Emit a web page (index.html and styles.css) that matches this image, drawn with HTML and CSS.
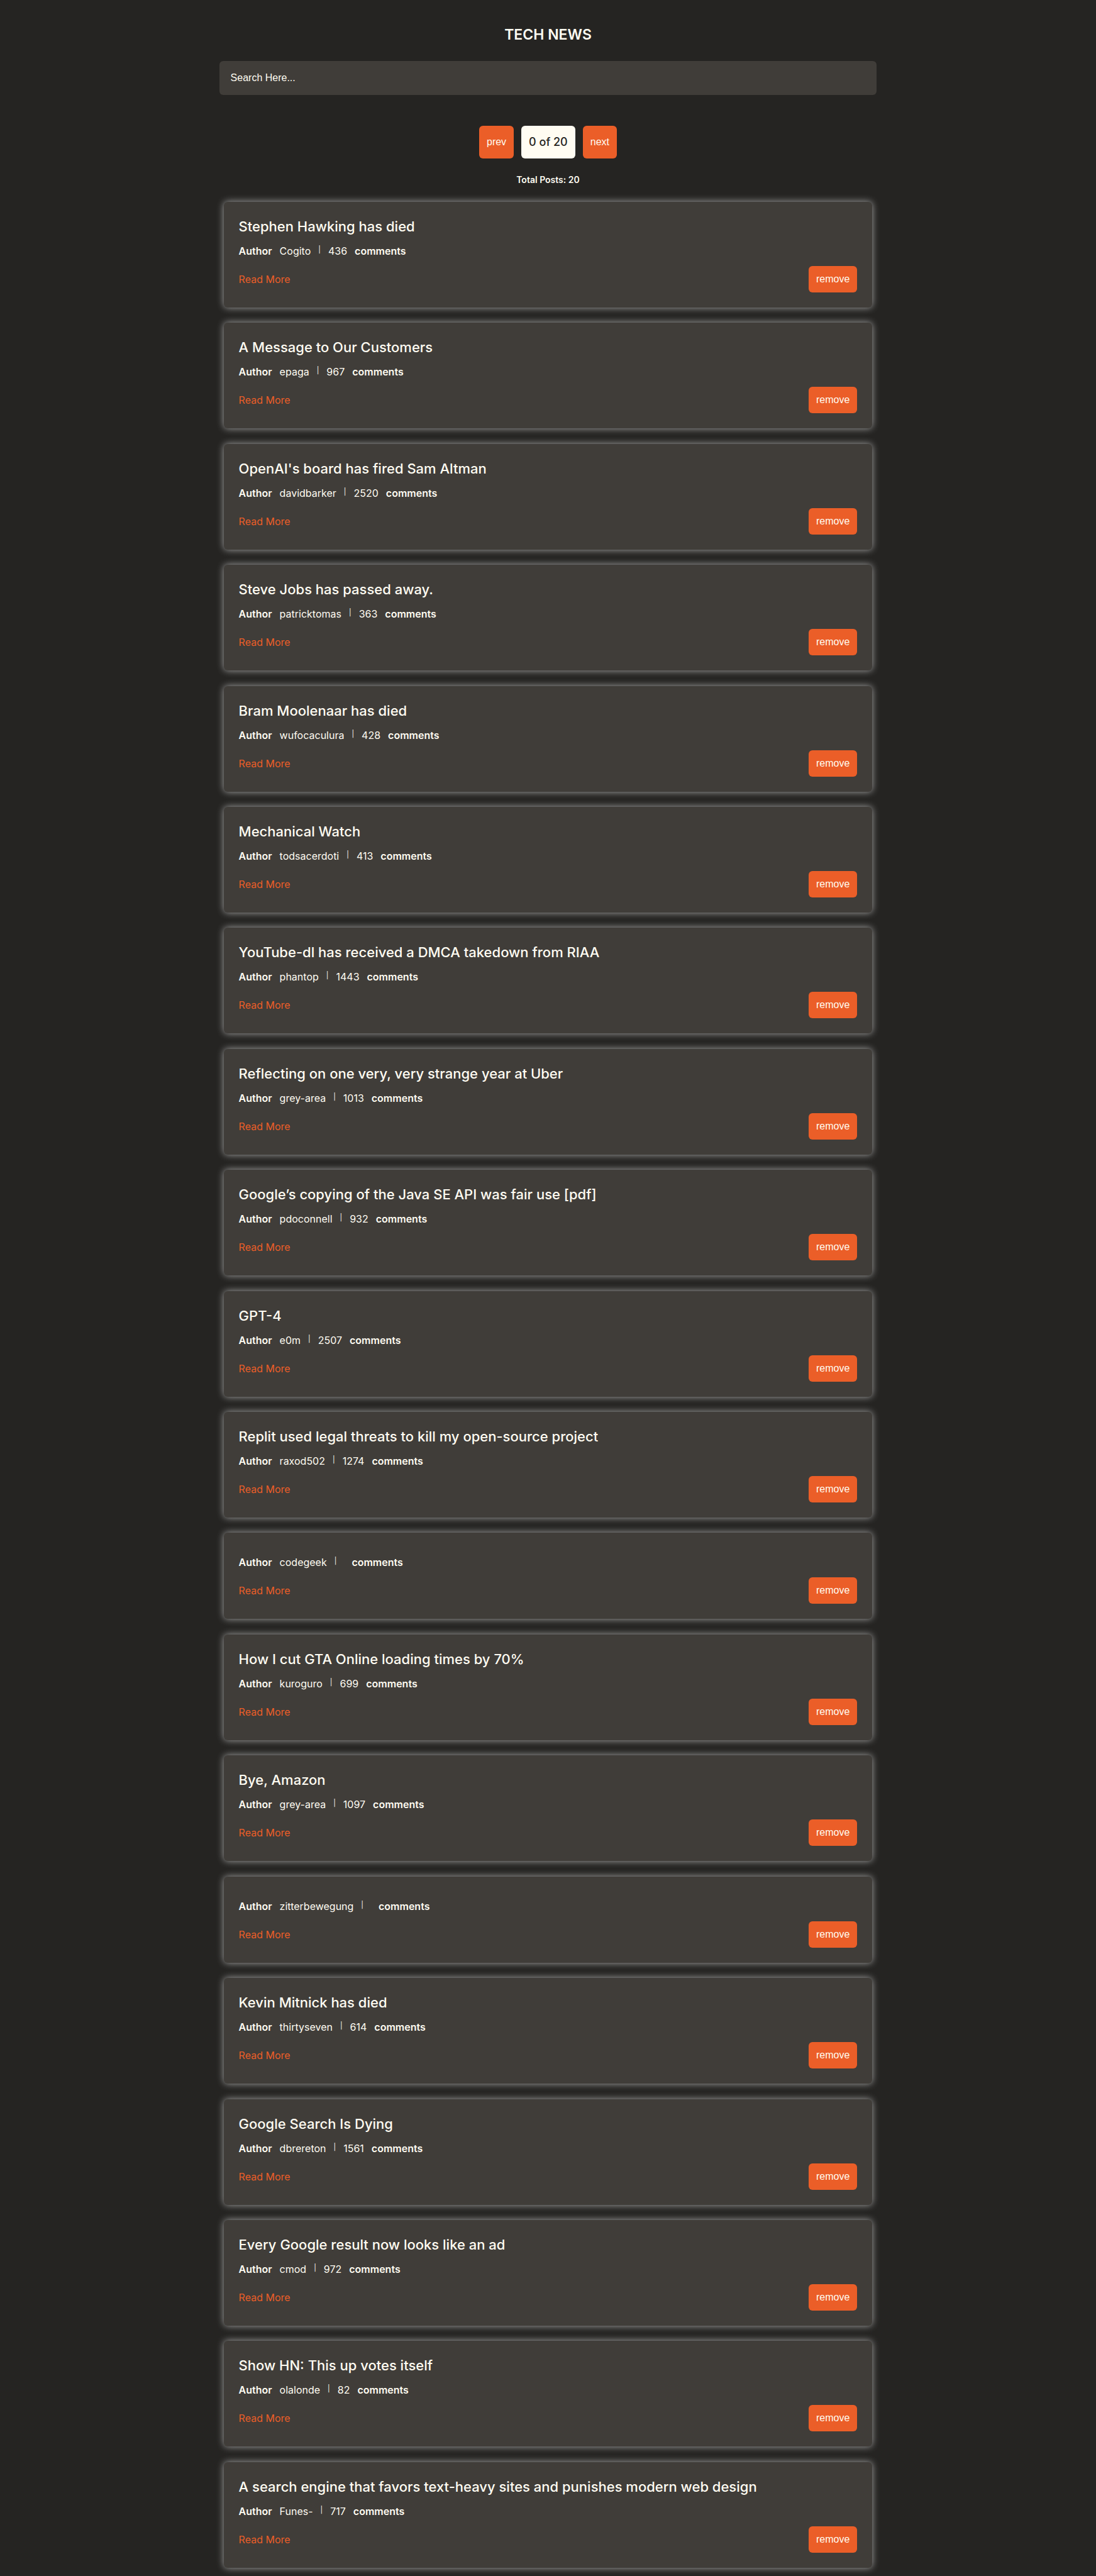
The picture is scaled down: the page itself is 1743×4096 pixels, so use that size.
FILE: index.html
```html
<!DOCTYPE html>
<html lang="en">
<head>
<meta charset="utf-8">
<meta name="viewport" content="width=device-width, initial-scale=1">
<title>Tech News</title>
<link rel="stylesheet" href="styles.css">
</head>
<body>
<div class="page">
  <form class="search">
    <h1 class="search-title"><label for="query">TECH NEWS</label></h1>
    <input class="search-input" id="query" type="text" placeholder="Search Here...">
  </form>
  <nav class="pager" aria-label="Pages">
    <button class="btn" type="button">prev</button>
    <p class="pager-status">0 of 20</p>
    <button class="btn" type="button">next</button>
  </nav>
  <p class="total">Total Posts: 20</p>
  <main class="posts" id="posts"></main>
</div>
<script src="posts.js"></script>
</body>
</html>
```
FILE: posts.js
```js
const posts = [
  ["Stephen Hawking has died", "Cogito", "436"],
  ["A Message to Our Customers", "epaga", "967"],
  ["OpenAI's board has fired Sam Altman", "davidbarker", "2520"],
  ["Steve Jobs has passed away.", "patricktomas", "363"],
  ["Bram Moolenaar has died", "wufocaculura", "428"],
  ["Mechanical Watch", "todsacerdoti", "413"],
  ["YouTube-dl has received a DMCA takedown from RIAA", "phantop", "1443"],
  ["Reflecting on one very, very strange year at Uber", "grey-area", "1013"],
  ["Google’s copying of the Java SE API was fair use [pdf]", "pdoconnell", "932"],
  ["GPT-4", "e0m", "2507"],
  ["Replit used legal threats to kill my open-source project", "raxod502", "1274"],
  ["", "codegeek", ""],
  ["How I cut GTA Online loading times by 70%", "kuroguro", "699"],
  ["Bye, Amazon", "grey-area", "1097"],
  ["", "zitterbewegung", ""],
  ["Kevin Mitnick has died", "thirtyseven", "614"],
  ["Google Search Is Dying", "dbrereton", "1561"],
  ["Every Google result now looks like an ad", "cmod", "972"],
  ["Show HN: This up votes itself", "olalonde", "82"],
  ["A search engine that favors text-heavy sites and punishes modern web design", "Funes-", "717"],
];

function el(tag, className, text) {
  const node = document.createElement(tag);
  node.className = className;
  if (text) node.textContent = text;
  return node;
}

const list = document.getElementById("posts");
for (const [title, author, comments] of posts) {
  const card = el("article", "card");
  if (title) card.append(el("h2", "card-title", title));

  const meta = el("p", "card-meta");
  meta.append(
    el("strong", "card-label", "Author"),
    el("span", "card-author", author),
    el("span", "card-divider", "|"),
    el("span", "card-count", comments),
    el("strong", "card-label", "comments")
  );

  const actions = el("div", "card-actions");
  const link = el("a", "card-link", "Read More");
  link.href = "#";
  const remove = el("button", "btn btn-small", "remove");
  remove.type = "button";
  actions.append(link, remove);

  card.append(meta, actions);
  list.append(card);
}
```
FILE: styles.css
```css
* {
  box-sizing: border-box;
  margin: 0;
  padding: 0;
}

body {
  background: #252422;
  color: #fffcf2;
  font-family: Inter, "Liberation Sans", sans-serif;
}

.page {
  display: flex;
  flex-direction: column;
  width: 60%;
  min-height: 100vh;
  margin: 0 auto;
  padding: 37px 0 13px;
}

.search {
  display: flex;
  flex-direction: column;
  gap: 24px;
}

.search-title {
  font-size: 23px;
  font-weight: 600;
  line-height: 36px;
  text-align: center;
}

.search-input {
  height: 54px;
  padding: 0 18px;
  border: none;
  border-radius: 6px;
  background: #403d39;
  color: #fffcf2;
  font: 16px "Liberation Sans", sans-serif;
}

.search-input::placeholder {
  color: #fffcf2;
  opacity: 1;
}

.pager {
  display: flex;
  justify-content: center;
  gap: 12px;
  margin-top: 49px;
}

.pager-status {
  padding: 0 12px;
  border-radius: 6px;
  background: #fffcf2;
  color: #252422;
  font-size: 18px;
  font-weight: 500;
  line-height: 52px;
}

.btn {
  padding: 0 12px;
  border: none;
  border-radius: 6px;
  background: #eb5e28;
  color: #fffcf2;
  font: 16px "Liberation Sans", sans-serif;
}

.total {
  margin-top: 24px;
  font-size: 14px;
  font-weight: 600;
  line-height: 20px;
  text-align: center;
}

.posts {
  display: flex;
  flex: 1;
  flex-direction: column;
  justify-content: space-between;
  gap: 24px;
  margin-top: 25px;
  padding: 0 7px;
}

.card {
  padding: 24px;
  border-radius: 6px;
  background: #403d39;
  box-shadow: 0 0 12px #a7a7a7;
}

.card-title {
  font-size: 22px;
  font-weight: 500;
  line-height: 31px;
}

.card-meta {
  display: flex;
  gap: 12px;
  padding-top: 11px;
  font-size: 16px;
  line-height: 24px;
}

.card-label {
  font-weight: 600;
}

.card-divider {
  font-size: 11px;
  line-height: 20px;
}

.card-actions {
  display: flex;
  justify-content: space-between;
  align-items: center;
  padding-top: 12px;
}

.card-link {
  color: #eb5e28;
  font-size: 16px;
  text-decoration: none;
}

.btn-small {
  height: 42px;
}
```
